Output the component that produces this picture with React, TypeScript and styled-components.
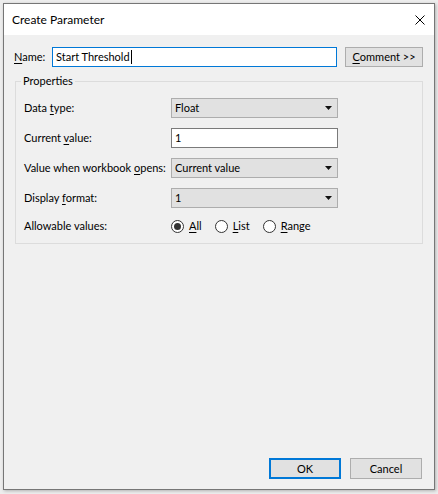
import React from "react";
import styled, { createGlobalStyle } from "styled-components";

const Global = createGlobalStyle`
  html, body { margin: 0; padding: 0; }
  body {
    width: 438px;
    height: 494px;
    overflow: hidden;
    background: #ececec;
    font-family: Lato, "Noto Sans", sans-serif;
    font-size: 11px;
    color: #000;
  }
  * { box-sizing: border-box; }
`;

const Backdrop = styled.div`
  width: 438px;
  height: 494px;
  padding: 3px 0 0 3px;
  background-color: #ededed;
`;

const Window = styled.div`
  width: 432px;
  height: 487px;
  border: 1px solid #767676;
  background: #f0f0f0;
  display: flex;
  flex-direction: column;
  box-shadow: 1px 1px 3px rgba(0, 0, 0, 0.25);
`;

const TitleBar = styled.div`
  height: 31px;
  background: #ffffff;
  display: flex;
  align-items: center;
  justify-content: space-between;
  padding-left: 8px;
`;

const Title = styled.span`
  font-size: 12px;
  line-height: 16px;
`;

const CloseButton = styled.div`
  width: 29px;
  height: 31px;
  display: flex;
  align-items: center;
  justify-content: center;
`;

const Body = styled.div`
  flex: 1;
  display: flex;
  flex-direction: column;
  padding: 12px 11px 10px 10px;
`;

const NameRow = styled.div`
  display: flex;
  align-items: center;
  height: 20px;
`;

const NameLabel = styled.span`
  width: 38px;
  line-height: 16px;
`;

const Key = styled.u`
  text-decoration: underline;
  text-underline-offset: 2px;
`;

const TextBox = styled.div<{ $focused?: boolean; $width: number }>`
  width: ${(p) => p.$width}px;
  height: 20px;
  background: #fff;
  border: 1px solid ${(p) => (p.$focused ? "#0078d7" : "#7a7a7a")};
  display: flex;
  align-items: center;
  padding-left: 3px;
  line-height: 16px;
  white-space: nowrap;
`;

const Caret = styled.span`
  display: inline-block;
  width: 1px;
  height: 14px;
  background: #000;
  margin-left: 1px;
`;

const PushButton = styled.div<{ $default?: boolean; $width: number; $height: number }>`
  width: ${(p) => p.$width}px;
  height: ${(p) => p.$height}px;
  background: #e1e1e1;
  border: ${(p) => (p.$default ? "2px solid #0078d7" : "1px solid #adadad")};
  display: flex;
  align-items: center;
  justify-content: center;
  line-height: 16px;
  white-space: nowrap;
`;

const GroupBox = styled.fieldset`
  margin: 6px 0 0 1px;
  width: 408px;
  border: 1px solid #dcdcdc;
  padding: 9px 8px 9px 8px;
  min-width: 0;
`;

const GroupTitle = styled.legend`
  padding: 0 2px;
  margin-left: -3px;
  line-height: 16px;
`;

const FormGrid = styled.div`
  display: grid;
  grid-template-columns: 147px 167px;
  grid-template-rows: 20px 20px 20px 20px 16px;
  row-gap: 10px;
  align-items: center;
`;

const FieldLabel = styled.span`
  line-height: 16px;
  white-space: nowrap;
`;

const Combo = styled.div`
  height: 20px;
  background: #e1e1e1;
  border: 1px solid #adadad;
  display: flex;
  align-items: center;
  justify-content: space-between;
  padding: 0 5px 0 3px;
  line-height: 16px;
  white-space: nowrap;
`;

const RadioGroup = styled.div`
  display: flex;
  align-items: center;
  gap: 13px;
`;

const RadioItem = styled.label`
  display: flex;
  align-items: center;
  gap: 5px;
  line-height: 16px;
`;

const RadioCircle = styled.span<{ $checked?: boolean }>`
  width: 13px;
  height: 13px;
  border-radius: 50%;
  border: 1px solid #333;
  background: #fff;
  display: flex;
  align-items: center;
  justify-content: center;
  &::after {
    content: "";
    width: 7px;
    height: 7px;
    border-radius: 50%;
    background: ${(p) => (p.$checked ? "#333" : "transparent")};
  }
`;

const Footer = styled.div`
  margin-top: auto;
  display: flex;
  justify-content: flex-end;
  gap: 9px;
  padding-right: 1px;
`;

const Arrow = () => (
  <svg width="7" height="4" viewBox="0 0 7 4">
    <polygon points="0,0 7,0 3.5,4" fill="#111" />
  </svg>
);

const CloseIcon = () => (
  <svg width="10" height="10" viewBox="0 0 10 10">
    <path d="M0.5 0.5 L9.5 9.5 M9.5 0.5 L0.5 9.5" stroke="#000" strokeWidth="1" fill="none" />
  </svg>
);

type ComboProps = { value: string };
const ComboBox = ({ value }: ComboProps) => (
  <Combo>
    <span>{value}</span>
    <Arrow />
  </Combo>
);

export default function App() {
  return (
    <>
      <Global />
      <Backdrop>
        <Window>
          <TitleBar>
            <Title>Create Parameter</Title>
            <CloseButton>
              <CloseIcon />
            </CloseButton>
          </TitleBar>
          <Body>
            <NameRow>
              <NameLabel>
                <Key>N</Key>ame:
              </NameLabel>
              <TextBox $focused $width={285}>
                Start Threshold
                <Caret />
              </TextBox>
              <span style={{ width: 8 }} />
              <PushButton $width={78} $height={20}>
                <Key>C</Key>omment &gt;&gt;
              </PushButton>
            </NameRow>
            <GroupBox>
              <GroupTitle>Properties</GroupTitle>
              <FormGrid>
                <FieldLabel>
                  Data <Key>t</Key>ype:
                </FieldLabel>
                <ComboBox value="Float" />
                <FieldLabel>
                  Current <Key>v</Key>alue:
                </FieldLabel>
                <TextBox $width={167}>1</TextBox>
                <FieldLabel>
                  Value when workbook <Key>o</Key>pens:
                </FieldLabel>
                <ComboBox value="Current value" />
                <FieldLabel>
                  Display <Key>f</Key>ormat:
                </FieldLabel>
                <ComboBox value="1" />
                <FieldLabel>Allowable values:</FieldLabel>
                <RadioGroup>
                  <RadioItem>
                    <RadioCircle $checked />
                    <span>
                      <Key>A</Key>ll
                    </span>
                  </RadioItem>
                  <RadioItem>
                    <RadioCircle />
                    <span>
                      <Key>L</Key>ist
                    </span>
                  </RadioItem>
                  <RadioItem>
                    <RadioCircle />
                    <span>
                      <Key>R</Key>ange
                    </span>
                  </RadioItem>
                </RadioGroup>
              </FormGrid>
            </GroupBox>
            <Footer>
              <PushButton $default $width={72} $height={21}>
                OK
              </PushButton>
              <PushButton $width={72} $height={21}>
                Cancel
              </PushButton>
            </Footer>
          </Body>
        </Window>
      </Backdrop>
    </>
  );
}
